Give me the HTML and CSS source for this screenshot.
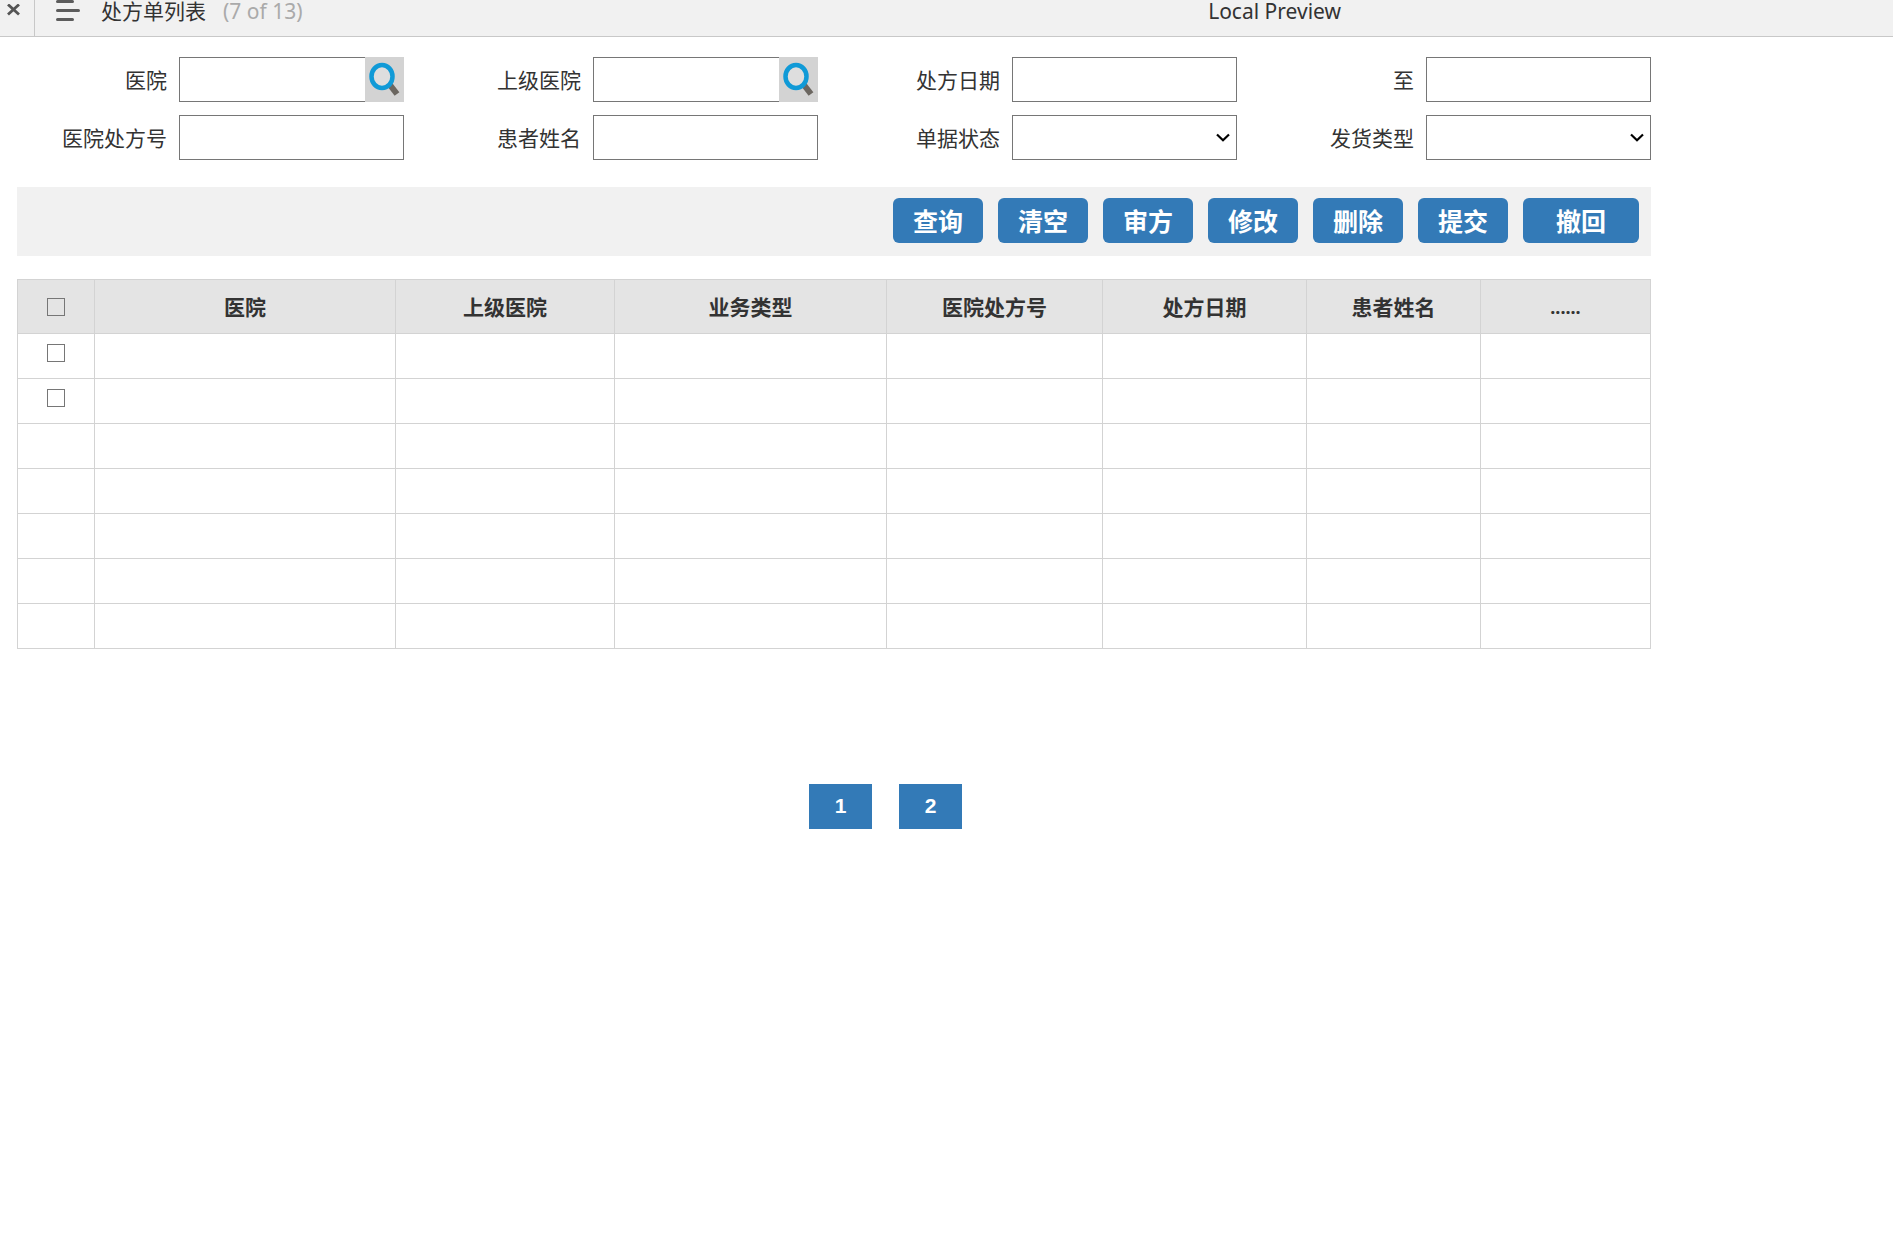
FILE: index.html
```
<!DOCTYPE html>
<html lang="zh-CN">
<head>
    <meta charset="UTF-8">
    <meta name="viewport" content="width=device-width, initial-scale=1.0">
    <title>处方单列表</title>
    <link rel="stylesheet" href="styles.css">
</head>
<body>
<header class="topbar">
    <button type="button" class="close" aria-label="Close">
        <svg width="13" height="12" viewBox="0 0 13 12"><path d="M1 0.500L12 10.500M12 0.500L1 10.500" stroke="#555" stroke-width="2.800" fill="none"/></svg>
    </button>
    <button type="button" class="menu" aria-label="Menu">
        <svg width="24" height="23" viewBox="0 0 24 23"><path d="M1.500 1.500H16.500M1.500 10.500H22.500M1.500 19.500H16.500" stroke="#5c5c5c" stroke-width="3" stroke-linecap="round" fill="none"/></svg>
    </button>
    <h1 class="title">处方单列表</h1>
    <span class="count">(7 of 13)</span>
    <span class="preview">Local Preview</span>
</header>
<main class="content">
    <form class="filters">
        <div class="field">
            <label for="hospital">医院</label>
            <div class="search-box">
                <input type="text" id="hospital">
                <button type="button" class="search" aria-label="查找医院">
                    <svg width="39" height="45" viewBox="0 0 39 45"><path d="M25 28L32 37" stroke="#6b6660" stroke-width="6" fill="none"/><ellipse cx="17" cy="19.500" rx="10.500" ry="11.500" fill="#dedede" stroke="#109ad7" stroke-width="4.500"/></svg>
                </button>
            </div>
        </div>
        <div class="field">
            <label for="parent-hospital">上级医院</label>
            <div class="search-box">
                <input type="text" id="parent-hospital">
                <button type="button" class="search" aria-label="查找上级医院">
                    <svg width="39" height="45" viewBox="0 0 39 45"><path d="M25 28L32 37" stroke="#6b6660" stroke-width="6" fill="none"/><ellipse cx="17" cy="19.500" rx="10.500" ry="11.500" fill="#dedede" stroke="#109ad7" stroke-width="4.500"/></svg>
                </button>
            </div>
        </div>
        <div class="field">
            <label for="date-from">处方日期</label>
            <input type="text" id="date-from">
        </div>
        <div class="field">
            <label for="date-to">至</label>
            <input type="text" id="date-to">
        </div>
        <div class="field">
            <label for="number">医院处方号</label>
            <input type="text" id="number">
        </div>
        <div class="field">
            <label for="patient">患者姓名</label>
            <input type="text" id="patient">
        </div>
        <div class="field">
            <label for="status">单据状态</label>
            <div class="select-box">
                <select id="status"><option></option></select>
                <svg class="arrow" width="14" height="9" viewBox="0 0 14 9"><path d="M1 1.500L7 7.300L13 1.500" stroke="#000" stroke-width="2.200" fill="none"/></svg>
            </div>
        </div>
        <div class="field">
            <label for="delivery">发货类型</label>
            <div class="select-box">
                <select id="delivery"><option></option></select>
                <svg class="arrow" width="14" height="9" viewBox="0 0 14 9"><path d="M1 1.500L7 7.300L13 1.500" stroke="#000" stroke-width="2.200" fill="none"/></svg>
            </div>
        </div>
    </form>
    <div class="toolbar">
        <button type="button" class="btn">查询</button>
        <button type="button" class="btn">清空</button>
        <button type="button" class="btn">审方</button>
        <button type="button" class="btn">修改</button>
        <button type="button" class="btn">删除</button>
        <button type="button" class="btn">提交</button>
        <button type="button" class="btn wide">撤回</button>
    </div>
    <table class="list">
        <colgroup>
            <col class="col-check">
            <col class="col-hospital">
            <col class="col-parent">
            <col class="col-type">
            <col class="col-number">
            <col class="col-date">
            <col class="col-patient">
            <col class="col-more">
        </colgroup>
        <thead>
        <tr>
            <th><input type="checkbox" aria-label="全选"></th>
            <th>医院</th>
            <th>上级医院</th>
            <th>业务类型</th>
            <th>医院处方号</th>
            <th>处方日期</th>
            <th>患者姓名</th>
            <th class="more">......</th>
        </tr>
        </thead>
        <tbody>
        <tr><td><input type="checkbox" aria-label="选择第1行"></td><td></td><td></td><td></td><td></td><td></td><td></td><td></td></tr>
        <tr><td><input type="checkbox" aria-label="选择第2行"></td><td></td><td></td><td></td><td></td><td></td><td></td><td></td></tr>
        <tr><td></td><td></td><td></td><td></td><td></td><td></td><td></td><td></td></tr>
        <tr><td></td><td></td><td></td><td></td><td></td><td></td><td></td><td></td></tr>
        <tr><td></td><td></td><td></td><td></td><td></td><td></td><td></td><td></td></tr>
        <tr><td></td><td></td><td></td><td></td><td></td><td></td><td></td><td></td></tr>
        <tr><td></td><td></td><td></td><td></td><td></td><td></td><td></td><td></td></tr>
        </tbody>
    </table>
    <nav class="pages">
        <button type="button" class="page">1</button>
        <button type="button" class="page">2</button>
    </nav>
</main>
</body>
</html>
```
FILE: styles.css
```
* {
    box-sizing: border-box;
    margin: 0;
    padding: 0;
}

body {
    font-family: "Noto Sans", "Noto Sans CJK SC", sans-serif;
    font-size: 21px;
    color: #333;
    background-color: #fff;
}

button,
input,
select {
    font: inherit;
}

svg {
    display: block;
}

/* Top bar */
.topbar {
    display: flex;
    height: 37px;
    line-height: 23px;
    background-color: #f1f1f1;
    border-bottom: 1px solid #c8c8c8;
}

.close,
.menu {
    display: flex;
    border: none;
    background: none;
}

.close {
    width: 35px;
    padding: 4px 0 0 7px;
    border-right: 1px solid #c8c8c8;
}

.menu {
    padding: 0 21px;
}

.title {
    font-size: 21px;
    font-weight: normal;
}

.count {
    margin-left: 17px;
    color: #aaa;
}

.preview {
    margin: 0 552px 0 auto;
}

.content {
    margin: 0 242px 0 17px;
}

/* Filters */
.filters {
    display: grid;
    grid-template-columns: 387fr 414fr 419fr 414fr;
    row-gap: 13px;
    padding: 20px 0 27px;
}

.field {
    display: flex;
    justify-content: flex-end;
    align-items: center;
    gap: 12px;
}

.field label {
    padding-bottom: 2px;
}

.field input,
.field select {
    display: block;
    width: 225px;
    height: 45px;
    padding: 0 8px;
    border: 1px solid #767676;
    border-radius: 0;
    background-color: #fff;
}

.field select {
    appearance: none;
}

.search-box,
.select-box {
    position: relative;
}

.search {
    position: absolute;
    top: 0;
    right: 0;
    border: none;
    background-color: #d3d3d3;
}

.arrow {
    position: absolute;
    top: 18px;
    right: 7px;
    pointer-events: none;
}

/* Buttons */
.toolbar {
    display: flex;
    justify-content: flex-end;
    gap: 15px;
    padding: 11px 12px 13px;
    background-color: #f1f1f1;
}

.btn {
    width: 90px;
    height: 45px;
    padding-bottom: 2px;
    border: none;
    border-radius: 6px;
    background-color: #337ab7;
    color: #fff;
    font-size: 25px;
    font-weight: bold;
}

.wide {
    width: 116px;
}

/* Table */
.list {
    width: 100%;
    margin-top: 23px;
    table-layout: fixed;
    border-collapse: collapse;
}

.list th,
.list td {
    height: 45px;
    border: 1px solid #d3d3d3;
    text-align: center;
}

.list th {
    height: 54px;
    background-color: #e4e4e4;
    line-height: 24px;
}

.list td {
    padding-bottom: 6px;
}

.list input {
    display: block;
    width: 18px;
    height: 18px;
    margin: 0 auto;
    appearance: none;
    border: 1px solid #767676;
}

.list input:checked {
    background-color: #337ab7;
}

.list .more {
    font-size: 18px;
}

.col-check {
    width: 77px;
}

.col-hospital {
    width: 301px;
}

.col-parent {
    width: 219px;
}

.col-type {
    width: 272px;
}

.col-number {
    width: 216px;
}

.col-date {
    width: 204px;
}

.col-patient {
    width: 174px;
}

/* Pagination */
.pages {
    display: flex;
    justify-content: center;
    gap: 27px;
    margin-top: 135px;
    padding-left: 103px;
}

.page {
    width: 63px;
    height: 45px;
    padding-bottom: 2px;
    border: none;
    background-color: #337ab7;
    color: #fff;
    font-family: "Liberation Sans", sans-serif;
    font-weight: bold;
}
```
